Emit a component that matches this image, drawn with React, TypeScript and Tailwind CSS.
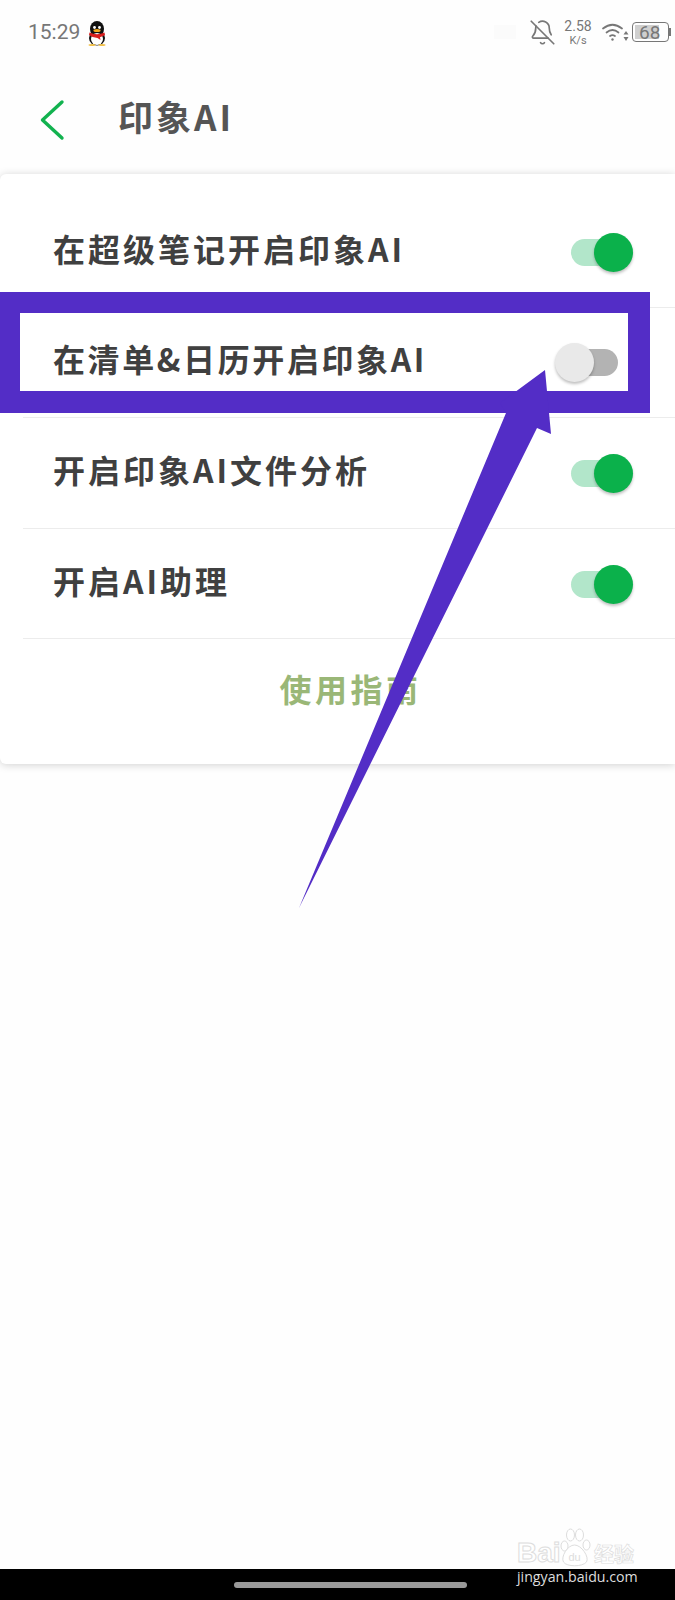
import { BellOff } from "lucide-react";

const rows = [
  { label: "在超级笔记开启印象AI", on: true, spacing: "tracking-[3px]" },
  { label: "在清单&日历开启印象AI", on: false, spacing: "tracking-[2.6px]" },
  { label: "开启印象AI文件分析", on: true, spacing: "tracking-[3px]" },
  { label: "开启AI助理", on: true, spacing: "tracking-[3px]" },
];

function Toggle({ on }: { on: boolean }) {
  if (on) {
    return (
      <div className="flex items-center mt-[1px] mr-[42px]">
        <div className="w-[39px] h-[27px] rounded-l-full bg-[#b2e6ca]" />
        <div className="w-[39px] h-[39px] -ml-[16px] rounded-full bg-[#0bb14b] shadow-[0_2px_3px_rgba(0,0,0,0.25)]" />
      </div>
    );
  }
  return (
    <div className="flex items-center mt-[1px] mr-[57px]">
      <div className="z-10 w-[39px] h-[39px] rounded-full bg-[#e9e9e9] shadow-[0_2px_3px_rgba(0,0,0,0.25)]" />
      <div className="w-[39px] h-[27px] -ml-[15px] rounded-r-full bg-[#b3b3b3]" />
    </div>
  );
}

function Penguin() {
  return (
    <svg width="22" height="25" viewBox="0 0 22 25">
      <ellipse cx="11" cy="17" rx="8" ry="7.5" fill="#111" />
      <ellipse cx="11" cy="8" rx="7" ry="8" fill="#111" />
      <ellipse cx="11" cy="18" rx="6" ry="6" fill="#fff" />
      <circle cx="8.5" cy="6.5" r="1.4" fill="#fff" />
      <circle cx="13.5" cy="6.5" r="1.4" fill="#fff" />
      <ellipse cx="11" cy="9.5" rx="3.6" ry="1.5" fill="#f2a71b" />
      <path d="M3.5 11.5 Q11 15 18.5 11.5 L19 14 Q15 16 14 16 L14.5 19 L11.5 17 Q6 16.5 3 14 Z" fill="#d81e1e" />
      <ellipse cx="6" cy="24" rx="3.5" ry="1" fill="#f2c14a" />
      <ellipse cx="16" cy="24" rx="3.5" ry="1" fill="#f2c14a" />
    </svg>
  );
}

function Wifi() {
  return (
    <svg width="27" height="20" viewBox="0 0 27 20" fill="none" stroke="#777" strokeWidth="1.7" strokeLinecap="round">
      <path d="M1 6.5 Q10.5 -1 20 6.5" />
      <path d="M4.5 10.5 Q10.5 5.5 16.5 10.5" />
      <path d="M8 14 Q10.5 12.2 13 14" />
      <circle cx="10.5" cy="17.5" r="1.2" fill="#777" stroke="none" />
      <path d="M24 9 L21.5 12.5 H26.5 Z" fill="#777" stroke="none" />
      <path d="M24 19 L21.5 15 H26.5 Z" fill="#777" stroke="none" />
    </svg>
  );
}

function StatusBar() {
  return (
    <div className="h-[60px] flex items-center justify-between pl-[28px] pr-[4px] pt-[4px]">
      <div className="flex items-center gap-[6px] pt-[2px] font-['Roboto',sans-serif] text-[21px] text-[#777777]">
        15:29
        <Penguin />
      </div>
      <div className="flex items-center text-[#777777] font-['Roboto',sans-serif]">
        <div className="w-[22px] h-[14px] mr-[13px] bg-[#fbfbfb]" />
        <BellOff size={27} strokeWidth={1.5} color="#777777" />
        <div className="flex flex-col items-center w-[34px] ml-[5px] leading-none">
          <span className="text-[14px]">2.58</span>
          <span className="text-[11px] mt-[2px]">K/s</span>
        </div>
        <div className="ml-[7px]">
          <Wifi />
        </div>
        <div className="flex items-center ml-[3px]">
          <div className="w-[37px] h-[20px] rounded-[4px] border-[1.5px] border-[#777777] p-[2px] flex">
            <div className="w-[24px] bg-[#cfcfcf] flex items-center">
              <span className="text-[19px] leading-none pl-[4px]">68</span>
            </div>
          </div>
          <div className="w-[2px] h-[8px] bg-[#777777]" />
        </div>
      </div>
    </div>
  );
}

function Header() {
  return (
    <div className="h-[114px] flex items-center pl-[40px]">
      <svg width="26" height="42" viewBox="0 0 26 42" fill="none" stroke="#12b24f" strokeWidth="3.4" strokeLinecap="round" strokeLinejoin="round" className="mt-[5px]">
        <path d="M22 3 L2.5 21 L22 39" />
      </svg>
      <span className="ml-[52px] -mt-[3px] text-[35px] font-bold tracking-[3px] text-[#555555] leading-none">印象AI</span>
    </div>
  );
}

function Card() {
  return (
    <div className="h-[590px] pt-[23px] bg-white rounded-tl-[6px] rounded-bl-[6px] shadow-[0_1px_8px_rgba(0,0,0,0.18)] flex flex-col">
      {rows.map((row) => (
        <div key={row.label} className="h-[110.6px] ml-[23px] pl-[30px] flex items-center justify-between border-b border-[#ececec]">
          <span className={`-mt-[8px] text-[32px] font-bold text-[#404040] leading-none ${row.spacing}`}>{row.label}</span>
          <Toggle on={row.on} />
        </div>
      ))}
      <div className="flex-1 ml-[23px] flex items-center justify-center pb-[27px] pl-[3px]">
        <span className="text-[32px] tracking-[3.5px] font-bold text-[#9ab777] leading-none">使用指南</span>
      </div>
    </div>
  );
}

function Annotation() {
  return (
    <svg className="absolute left-0 top-0" width="675" height="1000" viewBox="0 0 675 1000">
      <path d="M0 292 H650 V413 H0 Z M20 313 V391 H628 V313 Z" fill="#532dc6" fillRule="evenodd" />
      <polygon points="545,370 551,434 537,428 299,908 506,413 500,403" fill="#532dc6" />
    </svg>
  );
}

function Watermark() {
  return (
    <div className="absolute left-[517px] top-[1527px] w-[122px]">
      <div className="flex items-end h-[40px]">
        <span className="w-[38px] text-[28px] leading-none font-bold text-white font-['Liberation_Sans',sans-serif] [-webkit-text-stroke:1px_#dddddd]">Bai</span>
        <svg width="39" height="40" viewBox="0 0 38 40" fill="white" stroke="#dddddd" strokeWidth="1">
          <ellipse cx="9" cy="19" rx="3.5" ry="5" />
          <ellipse cx="15" cy="8" rx="4" ry="6" />
          <ellipse cx="24" cy="8" rx="4" ry="6" />
          <ellipse cx="31" cy="18" rx="3.5" ry="5" />
          <path d="M19 18 C12 18 5 30 8 35 C11 40 27 40 31 35 C34 30 26 18 19 18 Z" />
          <text x="19" y="34" textAnchor="middle" fontSize="11" fontFamily="Liberation Sans" fill="#dddddd" stroke="none">du</text>
        </svg>
        <span className="text-[20px] leading-none font-bold text-white mb-[3px] [-webkit-text-stroke:0.7px_#dddddd]">经验</span>
      </div>
      <div className="mt-[3px] text-[14.2px] leading-none text-[#dddddd] font-['Open_Sans',sans-serif] whitespace-nowrap">jingyan.baidu.com</div>
    </div>
  );
}

export default function App() {
  return (
    <div className="relative w-[675px] h-[1600px] overflow-hidden bg-[#fefefe] flex flex-col font-['Noto_Sans_CJK_SC',sans-serif]">
      <StatusBar />
      <Header />
      <Card />
      <div className="flex-1" />
      {/* Bottom gesture bar */}
      <div className="h-[31px] bg-black flex items-center pl-[234px]">
        <div className="w-[233px] h-[6px] rounded-full bg-[#999999]" />
      </div>
      <Annotation />
      <Watermark />
    </div>
  );
}
